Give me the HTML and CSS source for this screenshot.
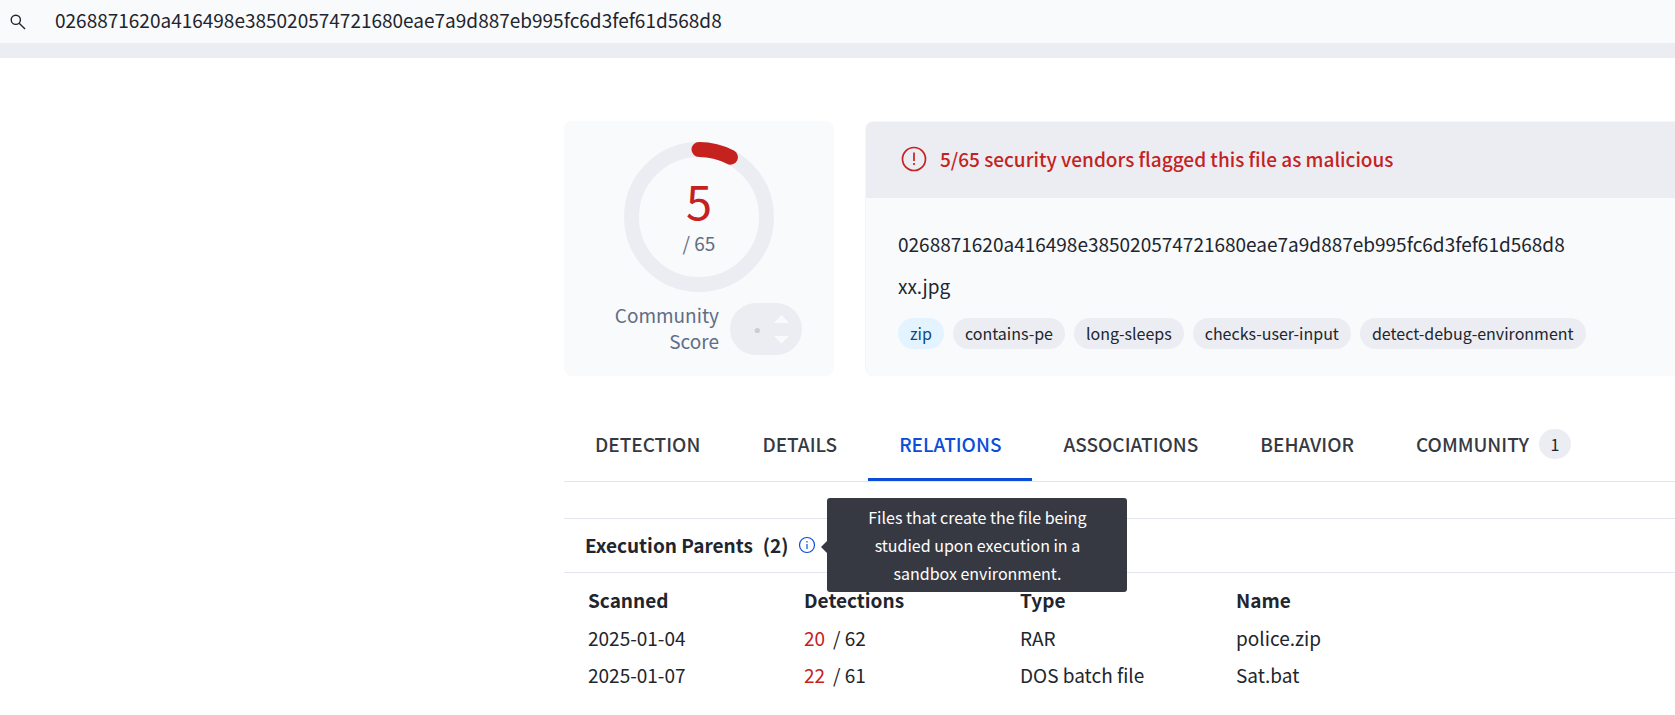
FILE: index.html
```html
<!DOCTYPE html>
<html lang="en">
<head>
<meta charset="utf-8">
<title>File report</title>
<link rel="stylesheet" href="styles.css">
</head>
<body>
<header class="topbar">
  <form class="search" role="search">
    <button class="search-button" type="button" aria-label="Search">
      <svg width="16" height="16" viewBox="0 0 16 16" fill="none" stroke="#21252d" stroke-width="1.4"><circle cx="5.8" cy="5.8" r="4.6"/><path d="M9.2 9.2 15 15"/></svg>
    </button>
    <input class="search-input" type="text" aria-label="Search query" value="0268871620a416498e385020574721680eae7a9d887eb995fc6d3fef61d568d8">
  </form>
</header>
<main class="report">
  <div class="summary">
    <section class="score-card">
      <div class="gauge">
        <svg class="gauge-ring" width="150" height="150" viewBox="0 0 150 150" fill="none" stroke-width="15"><circle cx="75" cy="75" r="67.5" stroke="#ecedf2"/><path d="M75 7.5A67.5 67.5 0 0 1 106.4 15.2" stroke="#c5221f" stroke-linecap="round"/></svg>
        <div class="gauge-text">
          <span class="gauge-value">5</span>
          <span class="gauge-total">/ 65</span>
        </div>
      </div>
      <div class="community">
        <span class="community-label">Community<br>Score</span>
        <svg class="community-pill" width="72" height="52" viewBox="0 0 72 52"><rect width="72" height="52" rx="26" fill="#ecedf2"/><circle cx="27.3" cy="27.5" r="2.6" fill="#c9cdd8"/><path d="M44 20 51.5 12 59 20ZM44 33 51.5 40.500 59 33Z" fill="#f9fafc"/></svg>
      </div>
    </section>
    <section class="file-card">
      <div class="verdict">
        <svg width="26" height="26" viewBox="0 0 26 26" fill="none" stroke="#c5221f" stroke-width="1.7"><circle cx="13" cy="13" r="11.500"/><path d="M13 6.500v8.500M13 17v2"/></svg>
        <span>5/65 security vendors flagged this file as malicious</span>
      </div>
      <div class="file-info">
        <div class="file-line">0268871620a416498e385020574721680eae7a9d887eb995fc6d3fef61d568d8</div>
        <div class="file-line">xx.jpg</div>
        <div class="tags">
          <a class="tag tag-type" href="#">zip</a>
          <a class="tag" href="#">contains-pe</a>
          <a class="tag" href="#">long-sleeps</a>
          <a class="tag" href="#">checks-user-input</a>
          <a class="tag" href="#">detect-debug-environment</a>
        </div>
      </div>
    </section>
  </div>
  <nav class="tabs">
    <a class="tab" href="#">DETECTION</a>
    <a class="tab" href="#">DETAILS</a>
    <a class="tab tab-active" href="#" aria-current="page">RELATIONS</a>
    <a class="tab" href="#">ASSOCIATIONS</a>
    <a class="tab" href="#">BEHAVIOR</a>
    <a class="tab" href="#">COMMUNITY <span class="count">1</span></a>
  </nav>
  <section class="relations">
    <div class="section-head">
      <h2 class="section-title">Execution Parents</h2>
      <span class="section-count">(2)</span>
      <div class="info">
        <button class="info-button" type="button" aria-label="About execution parents" aria-describedby="parents-tip">
          <svg width="18" height="18" viewBox="0 0 18 18" fill="none" stroke="#0b4dda" stroke-width="1.2"><circle cx="9" cy="9" r="7.500"/><path d="M9 8v5M9 5v1.500"/></svg>
        </button>
        <div class="tooltip" id="parents-tip" role="tooltip">Files that create the file being studied upon execution in a sandbox environment.</div>
      </div>
    </div>
    <table class="files">
      <thead><tr><th>Scanned</th><th>Detections</th><th>Type</th><th>Name</th></tr></thead>
      <tbody>
        <tr><td>2025-01-04</td><td><span class="hits">20</span>/ 62</td><td>RAR</td><td>police.zip</td></tr>
        <tr><td>2025-01-07</td><td><span class="hits">22</span>/ 61</td><td>DOS batch file</td><td>Sat.bat</td></tr>
      </tbody>
    </table>
  </section>
</main>
</body>
</html>
```
FILE: styles.css
```css
* { box-sizing: border-box; }
body {
  margin: 0;
  background: #fff;
  color: #21252d;
  font: 19px/26px "Noto Sans CJK SC", sans-serif;
  overflow-x: hidden;
}
a { color: inherit; text-decoration: none; }
button { border: 0; padding: 0; background: none; display: flex; cursor: pointer; }

.topbar { background: #f9fafc; border-bottom: 15px solid #ecedf2; }
.search { display: flex; align-items: center; gap: 29px; height: 43px; padding-left: 10px; }
.search-input {
  flex: 1;
  border: 0;
  padding: 0 0 4px;
  outline: 0;
  background: none;
  color: inherit;
  font: inherit;
}

.report { margin-left: 564px; padding-top: 63px; }
.summary { display: flex; gap: 31px; }
.score-card {
  flex: none;
  width: 270px;
  padding: 21px 32px;
  border-radius: 8px;
  background: #f9fafc;
}
.gauge { display: grid; place-items: center; }
.gauge-ring, .gauge-text { grid-area: 1 / 1; }
.gauge-text { display: flex; flex-direction: column; align-items: center; gap: 2px; padding-bottom: 6px; }
.gauge-value { color: #c5221f; font-size: 47px; line-height: 56px; }
.gauge-total { color: #606e85; }
.community {
  display: flex;
  justify-content: flex-end;
  align-items: flex-end;
  gap: 11px;
  margin-top: 11px;
  color: #606e85;
  text-align: right;
}
.community-pill { display: block; }
.community-label { padding-bottom: 1px; margin-top: -1px; }

.file-card {
  flex: 1;
  min-width: 0;
  border: solid #f4f5f8;
  border-width: 1px 0 0 1px;
  border-radius: 8px 0 0 8px;
  background: #f9fafc;
  overflow: hidden;
}
.verdict {
  display: flex;
  align-items: center;
  gap: 13px;
  height: 76px;
  padding: 0 0 2px 35px;
  background: #ecedf2;
  color: #c5221f;
  font-weight: 500;
}
.file-info { padding: 33px 32px 26px; }
.file-line { margin-bottom: 16px; }
.tags { display: flex; gap: 9px; margin-top: 19px; }
.tag {
  padding: 0 12px;
  border-radius: 16px;
  background: #ecedf2;
  font-size: 16px;
  line-height: 31px;
  white-space: nowrap;
}
.tag-type { background: #e3f3ff; color: #0c4a85; }

.tabs {
  display: flex;
  margin-top: 32px;
  border-bottom: 1px solid #e3e5eb;
  color: #363942;
  font-weight: 500;
}
.tab {
  display: flex;
  align-items: center;
  gap: 10px;
  height: 73px;
  padding: 1px 31px 0;
  border-bottom: 3px solid transparent;
}
.tab-active { border-color: #0b4dda; color: #0b4dda; }
.count {
  width: 32px;
  border-radius: 16px;
  background: #ecedf2;
  color: #21252d;
  font-size: 16px;
  font-weight: 400;
  line-height: 30px;
  text-align: center;
}

.relations { margin-top: 36px; border-top: 1px solid #e3e7ed; }
.section-head {
  display: flex;
  align-items: center;
  height: 54px;
  padding: 0 0 2px 21px;
  border-bottom: 1px solid #e3e7ed;
  font-weight: 700;
}
.section-title { margin: 0; font-size: inherit; }
.section-count { margin: 0 10px; }
.info { position: relative; }
.tooltip {
  position: absolute;
  top: -38px;
  left: 29px;
  width: 300px;
  padding: 5px 32px;
  border-radius: 3px;
  background: #363942;
  color: #fff;
  font-size: 16px;
  font-weight: 400;
  line-height: 28px;
  text-align: center;
}
.tooltip::before {
  content: "";
  position: absolute;
  top: 43px;
  right: 100%;
  border: solid transparent;
  border-width: 6px 6px 6px 0;
  border-right-color: #363942;
}

.files { width: 100%; margin-top: 9px; border-spacing: 0; table-layout: fixed; }
.files th, .files td { width: 216px; height: 37px; padding: 0 0 0 24px; text-align: left; white-space: nowrap; }
.files th { padding-bottom: 2px; }
.files th:last-child, .files td:last-child { width: auto; }
.hits { margin-right: 8px; color: #c5221f; }
```
